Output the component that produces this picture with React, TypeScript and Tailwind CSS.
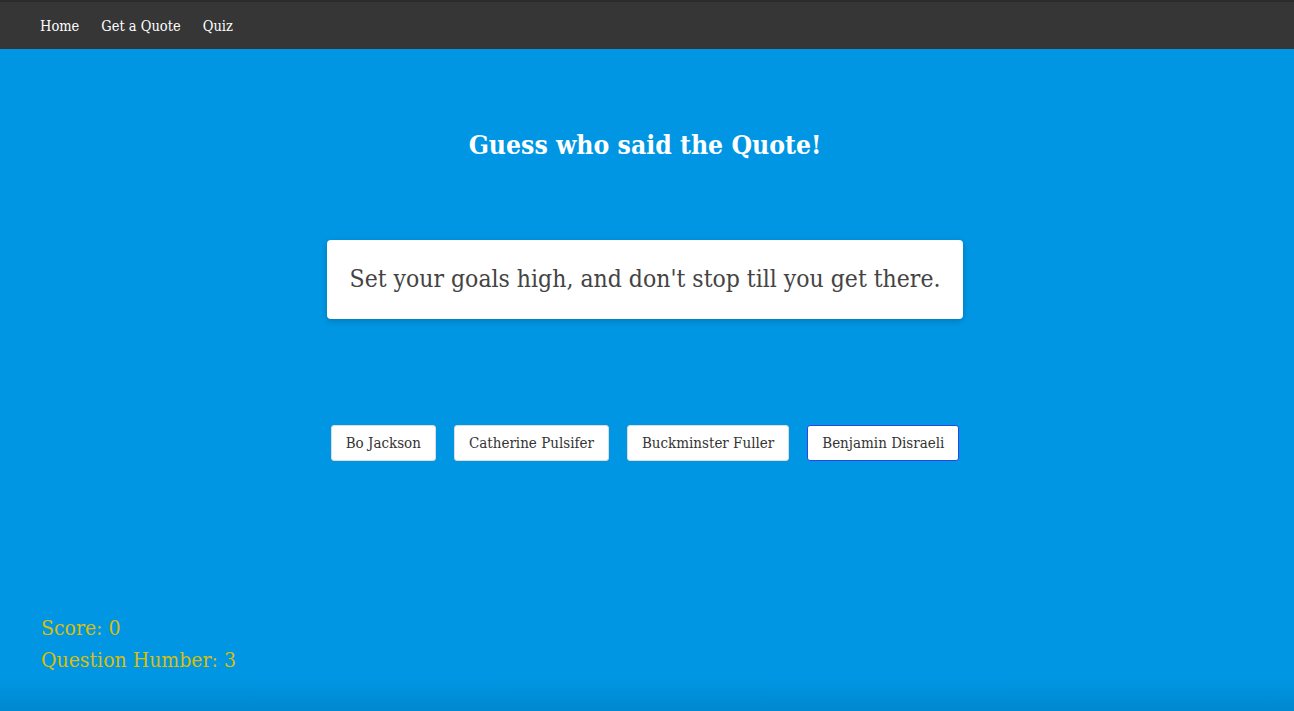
import React from "react";

const slab = { fontFamily: '"Roboto Slab", "DejaVu Serif Condensed", "DejaVu Serif", serif' };

const authors = ["Bo Jackson", "Catherine Pulsifer", "Buckminster Fuller", "Benjamin Disraeli"];

export default function App() {
  return (
    <div className="w-[1294px] h-[711px] flex flex-col bg-[#0096e3] overflow-hidden" style={slab}>
      <nav className="h-[49px] shrink-0 bg-[#363636] border-t-2 border-[#2b2b2d] flex items-center gap-[22px] pl-10 pt-[2px] text-[14.5px] text-white">
        <a>Home</a>
        <a>Get a Quote</a>
        <a>Quiz</a>
      </nav>
      <main className="flex-1 flex flex-col pr-[4px] bg-gradient-to-b from-[#0096e3] from-[95%] to-[#0088d0]">
        <h1 className="mt-[78px] text-center text-white font-bold text-[26.3px] leading-[36px]">
          Guess who said the Quote!
        </h1>
        <div className="mt-[77px] mx-auto w-[636px] h-[79px] bg-white rounded-[4px] shadow-[0_2px_6px_rgba(0,0,0,0.2)] flex items-center justify-center">
          <p className="text-[24.5px] text-[#444]">Set your goals high, and don't stop till you get there.</p>
        </div>
        <div className="mt-[106px] flex justify-center gap-[18px]">
          {authors.map((a, i) => (
            <button
              key={a}
              className={
                i === 3
                  ? "h-9 px-[14px] bg-white rounded-[3px] border border-[#2b44e8] text-[15px] text-[#333]"
                  : "h-9 px-[14px] bg-white rounded-[3px] border border-[#dcdcdc] text-[15px] text-[#333]"
              }
            >
              {a}
            </button>
          ))}
        </div>
        <div className="mt-auto pl-[41px] pb-[35px] text-[21px] leading-[32px] text-[#d9be0b]">
          <p>Score: 0</p>
          <p>Question Humber: 3</p>
        </div>
      </main>
    </div>
  );
}
